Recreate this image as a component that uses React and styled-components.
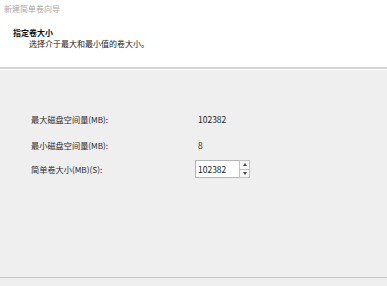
import React from "react";
import styled, { createGlobalStyle } from "styled-components";

const Global = createGlobalStyle`
  html, body { margin: 0; padding: 0; background: #f0f0f0; }
  body { font-family: "Noto Sans CJK SC", "Noto Sans", sans-serif; }
`;

const Window = styled.div`
  width: 387px;
  height: 286px;
  display: flex;
  flex-direction: column;
  overflow: hidden;
`;

const Header = styled.div`
  background: #fff;
  height: 69px;
  flex: none;
  border-bottom: 2px solid #d6d6d6;
  display: flex;
  flex-direction: column;
  box-sizing: border-box;
  padding: 3px 0 0 4px;
`;

const WindowTitle = styled.div`
  font-size: 8px;
  line-height: 12px;
  color: #a8a8a8;
`;

const PageTitle = styled.div`
  margin: 12px 0 0 9px;
  font-size: 8px;
  line-height: 11px;
  font-weight: 700;
  color: #111;
`;

const PageSub = styled.div`
  margin: 0 0 0 25px;
  font-size: 8px;
  line-height: 11px;
  color: #222;
`;

const Body = styled.div`
  flex: 1;
  background: #efefef;
  border-top: 1px solid #fbfbfb;
  padding: 38px 0 0 31px;
  display: flex;
  flex-direction: column;
`;

const Row = styled.div`
  display: flex;
  align-items: center;
  height: ${(p) => p.$h}px;
`;

const Label = styled.div`
  width: 164px;
  flex: none;
  font-size: 8.2px;
  color: #2a2a2a;
`;

const Value = styled.div`
  font-size: 8.5px;
  color: #2a2a2a;
  padding-left: 3px;
`;

const Spin = styled.div`
  display: flex;
  height: 18px;
`;

const Field = styled.div`
  width: 44px;
  box-sizing: border-box;
  border: 1px solid #b5b5b5;
  border-right: none;
  background: #fff;
  font-size: 8.5px;
  color: #222;
  padding-left: 2px;
  display: flex;
  align-items: center;
`;

const Arrows = styled.div`
  display: flex;
  flex-direction: column;
  width: 11px;
`;

const ArrowBtn = styled.div`
  flex: 1;
  box-sizing: border-box;
  border: 1px solid #c3c3c3;
  border-top-width: ${(p) => (p.$down ? "0" : "1px")};
  background: #f7f7f7;
  display: flex;
  align-items: center;
  justify-content: center;
`;

const Footer = styled.div`
  height: 8px;
  flex: none;
  background: #efefef;
  border-top: 1px solid #c6c6c6;
`;

const Tri = ({ down }) => (
  <svg width="4" height="3" viewBox="0 0 4 3">
    {down ? (
      <polygon points="0,0 4,0 2,3" fill="#444" />
    ) : (
      <polygon points="0,3 4,3 2,0" fill="#444" />
    )}
  </svg>
);

export default function App() {
  return (
    <>
      <Global />
      <Window>
        <Header>
          <WindowTitle>新建简单卷向导</WindowTitle>
          <PageTitle>指定卷大小</PageTitle>
          <PageSub>选择介于最大和最小值的卷大小。</PageSub>
        </Header>
        <Body>
          <Row $h={22}>
            <Label>最大磁盘空间量(MB):</Label>
            <Value>102382</Value>
          </Row>
          <Row $h={30}>
            <Label>最小磁盘空间量(MB):</Label>
            <Value>8</Value>
          </Row>
          <Row $h={18}>
            <Label>简单卷大小(MB)(S):</Label>
            <Spin>
              <Field>102382</Field>
              <Arrows>
                <ArrowBtn>
                  <Tri />
                </ArrowBtn>
                <ArrowBtn $down>
                  <Tri down />
                </ArrowBtn>
              </Arrows>
            </Spin>
          </Row>
        </Body>
        <Footer />
      </Window>
    </>
  );
}
